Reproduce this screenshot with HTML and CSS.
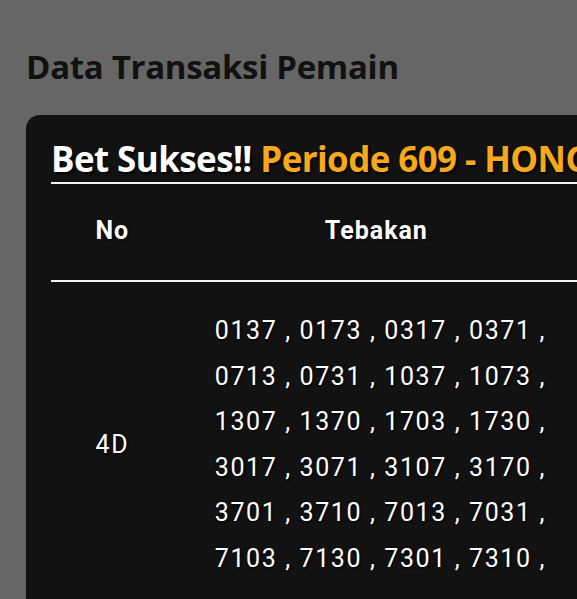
FILE: index.html
```html
<!DOCTYPE html>
<html lang="id">
<head>
    <meta charset="UTF-8">
    <meta name="viewport" content="width=device-width, initial-scale=1.0">
    <title>Data Transaksi Pemain</title>
    <link rel="stylesheet" href="styles.css">
</head>
<body>
    <h1 class="page-title">Data Transaksi Pemain</h1>
    <div class="card">
        <h2 class="bet-title">Bet Sukses!! <span class="periode">Periode 609 - HONGKONG</span></h2>
        <table class="bet-table">
            <thead>
                <tr>
                    <th class="col-no">No</th>
                    <th class="col-tebakan">Tebakan</th>
                </tr>
            </thead>
            <tbody>
                <tr>
                    <td class="col-no">4D</td>
                    <td class="col-tebakan">0137 , 0173 , 0317 , 0371 , 0713 , 0731 , 1037 , 1073 , 1307 , 1370 , 1703 , 1730 , 3017 , 3071 , 3107 , 3170 , 3701 , 3710 , 7013 , 7031 , 7103 , 7130 , 7301 , 7310 ,</td>
                </tr>
            </tbody>
        </table>
    </div>
</body>
</html>
```

FILE: styles.css
```css
html, body {
    overflow: hidden;
}
body {
    margin: 0;
    background-color: #666666;
    font-family: "Open Sans", sans-serif;
}
.page-title {
    margin: 50px 0 32px 26px;
    font-size: 33px;
    line-height: 1;
    font-weight: 700;
    letter-spacing: -0.3px;
    color: #111111;
    white-space: nowrap;
}
.card {
    margin-left: 26px;
    width: 900px;
    min-height: 600px;
    background-color: #121212;
    border-radius: 14px 0 0 0;
    padding: 26px 25px;
}
.bet-title {
    margin: 0;
    padding-bottom: 6px;
    border-bottom: 2px solid #f2f2f2;
    font-size: 35px;
    line-height: 1;
    font-weight: 700;
    letter-spacing: -0.6px;
    color: #ffffff;
    white-space: nowrap;
    text-shadow: 2px 2px 2px #000;
}
.periode {
    color: #f7a81b;
}
.bet-table {
    border-collapse: collapse;
    width: 528px;
    font-family: Roboto, sans-serif;
    color: #ffffff;
    text-shadow: 1px 1px 3px #000;
}
.bet-table th {
    padding: 34px 0 37px;
    font-size: 25px;
    line-height: 25px;
    font-weight: 700;
    letter-spacing: 1px;
    border-bottom: 2px solid #f2f2f2;
}
.bet-table td {
    padding: 26px 0 30px;
    vertical-align: middle;
    text-align: center;
    font-size: 25px;
    line-height: 45.6px;
    letter-spacing: 1.6px;
}
.col-no {
    width: 130px;
    text-align: center;
}
.col-tebakan {
    width: 398px;
}
td.col-tebakan {
    padding-left: 20px;
    padding-right: 12px;
}
```
